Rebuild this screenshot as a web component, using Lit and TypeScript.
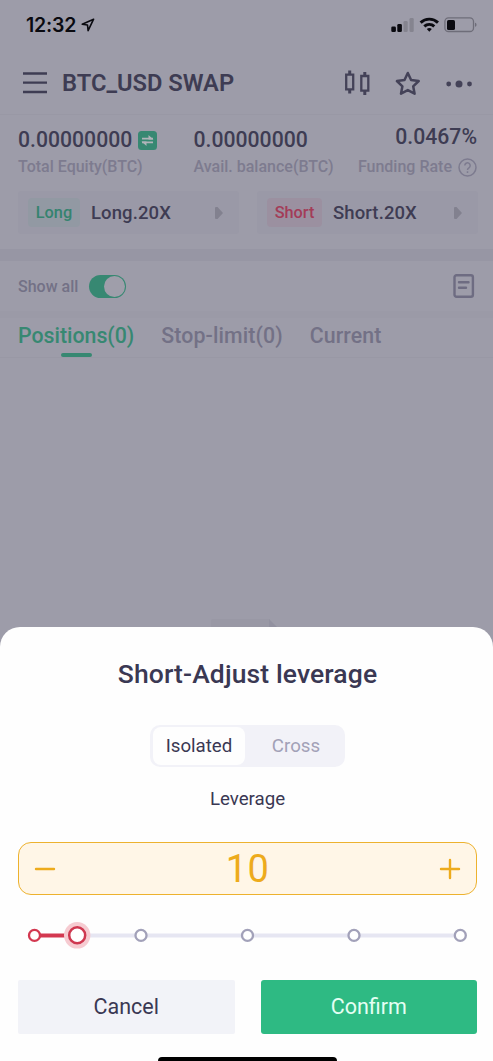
import { LitElement, html, css, svg } from "lit";
import { customElement, property, state } from "lit/decorators.js";

@customElement("status-bar")
class StatusBar extends LitElement {
  static styles = css`
    :host { display: flex; align-items: center; height: 50px; padding: 0 16px 0 26px; color: #0a0a10; }
    .time { font: 600 19.500px/24px Inter, sans-serif; letter-spacing: -0.2px; }
    .loc { margin-left: 5px; }
    .right { margin-left: auto; }
    svg { display: block; }
  `;
  render() {
    return html`
      <span class="time">12:32</span>
      <svg class="loc" width="14" height="14" viewBox="0 0 14 14" fill="none" stroke="currentColor" stroke-width="1.6" stroke-linejoin="round"><path d="M12.600 1.200 1.200 6.200l5.300.8.600 5.600z"/></svg>
      <svg class="right" width="86" height="18" viewBox="391 16 86 18">
        <rect x="391.300" y="26.500" width="4.600" height="5.500" rx="1.300" fill="currentColor"/>
        <rect x="397.300" y="24" width="4.600" height="8" rx="1.300" fill="currentColor"/>
        <rect x="403.500" y="21" width="4.200" height="11" rx="1.300" fill="#85848f"/>
        <rect x="409.500" y="18" width="4.200" height="14" rx="1.300" fill="#85848f"/>
        <g fill="none" stroke="currentColor" stroke-width="2.900"><path d="M420.600 22.600a12.600 12.600 0 0 1 17.400 0M424.300 26.400a7.200 7.200 0 0 1 10 0"/></g>
        <path d="M426.800 29a4 4 0 0 1 5 0l-2.500 2.800z" fill="currentColor"/>
        <rect x="444.900" y="17.900" width="28.600" height="13.600" rx="3.600" fill="none" stroke="#6e6d79" stroke-width="1.300"/>
        <rect x="447" y="20" width="8" height="10" rx="1.600" fill="currentColor"/>
        <path d="M475 22.800c2 .6 2 3.400 0 4z" fill="#6e6d79"/>
      </svg>`;
  }
}

@customElement("side-card")
class SideCard extends LitElement {
  @property() side = "Long";
  static styles = css`
    :host { display: flex; align-items: center; box-sizing: border-box; height: 43px; padding: 0 16px 0 10px; background: #9a99a7; border-radius: 3px; }
    .tag { width: 52px; height: 29px; border-radius: 4px; text-align: center; font: 500 16.300px/29px Roboto, sans-serif; }
    .Long { background: #9299a3; color: #35836f; }
    .Short { background: #9b90a0; width: 55px; color: #a33c58; }
    .name { margin-left: 11px; font: 500 18.500px/24px Roboto, sans-serif; color: #3e3c53; letter-spacing: 0.1px; }
    svg { margin-left: auto; display: block; }
  `;
  render() {
    return html`
      <span class="tag ${this.side}">${this.side}</span>
      <span class="name">${this.side}.20X</span>
      <svg width="8" height="12" viewBox="0 0 8 12"><path d="M0 1q0-1 1-1h1.500L8 6l-5.500 6H1q-1 0-1-1z" fill="#82818f"/></svg>`;
  }
}

@customElement("leverage-slider")
class LeverageSlider extends LitElement {
  static styles = css`:host, svg { display: block; }`;
  render() {
    return html`<svg width="459" height="30" viewBox="18 920 459 30" fill="#fff">
      <path d="M77 935.500H460" stroke="#e6e6f2" stroke-width="4"/>
      <path d="M34.500 935.500H77" stroke="#d33850" stroke-width="4"/>
      ${[141, 247.5, 354, 460.3].map(x => svg`<circle cx=${x} cy="935.400" r="5.500" stroke="#a2a1b9" stroke-width="2.300"/>`)}
      <circle cx="34.500" cy="935.400" r="5.500" stroke="#d33850" stroke-width="2.300"/>
      <circle cx="77.200" cy="935.300" r="13.200" fill="#f6cbd1"/>
      <circle cx="77.200" cy="935.300" r="8" stroke="#cf3850" stroke-width="2.500"/>
    </svg>`;
  }
}

@customElement("leverage-sheet")
class LeverageSheet extends LitElement {
  @state() leverage = 10;
  static styles = css`
    :host { display: flex; flex-direction: column; align-items: center; box-sizing: border-box; height: 434px; padding: 0 16px 0 18px; background: #fefefe; border-radius: 20px 20px 0 0; overflow: hidden; font-family: Roboto, sans-serif; color: #3a3853; }
    .title { margin-top: 31px; font-size: 26.500px; line-height: 32px; font-weight: 500; letter-spacing: 0.120px; }
    .seg { display: flex; box-sizing: border-box; width: 195px; height: 42px; margin-top: 35px; padding: 2px 3px; border-radius: 10px; background: #f2f2f8; font-size: 18.700px; line-height: 39px; text-align: center; }
    .seg span { flex: 1; padding-left: 5px; color: #a2a1b7; }
    .seg .on { flex: 0 0 92px; padding: 0; background: #fefefe; border-radius: 8px; color: #3a3853; }
    .label { margin-top: 20px; font-size: 18.700px; line-height: 25px; }
    .stepper { display: flex; align-items: center; justify-content: space-between; align-self: stretch; box-sizing: border-box; height: 53px; margin: 30px 0 1px; padding: 0 15px; border: 1.500px solid #edb22e; border-radius: 13px; background: #fff6e7; color: #edab1c; font-size: 38px; line-height: 50px; letter-spacing: 0.300px; }
    .stepper svg { margin-top: 1px; }
    .slider { margin-top: 24px; align-self: stretch; }
    .actions { display: flex; gap: 26px; align-self: stretch; margin-top: 30px; }
    .btn { flex: 1; height: 54px; border-radius: 2px; background: #f2f3f8; text-align: center; font-size: 21.500px; line-height: 54px; }
    .go { border-radius: 3px; background: #2eba83; color: #e4fff3; }
    .home { width: 179px; height: 8px; margin-top: 23px; border-radius: 4px; background: #000; flex: none; }
    .stepper, .actions, .slider { flex: none; }
  `;
  render() {
    const icon = (d: string) => html`<svg width="22" height="22" viewBox="0 0 22 22" stroke="currentColor" stroke-width="2.400" stroke-linecap="round"><path d=${d}/></svg>`;
    return html`
      <div class="title">Short-Adjust leverage</div>
      <div class="seg"><span class="on">Isolated</span><span>Cross</span></div>
      <div class="label">Leverage</div>
      <div class="stepper">${icon("M2 11h18")}<span>${this.leverage}</span>${icon("M2 11h18M11 2v18")}</div>
      <leverage-slider class="slider"></leverage-slider>
      <div class="actions"><div class="btn">Cancel</div><div class="btn go">Confirm</div></div>
      <div class="home"></div>`;
  }
}

@customElement("app-root")
class AppRoot extends LitElement {
  static styles = css`
    :host { display: flex; flex-direction: column; width: 493px; height: 1061px; overflow: hidden; background: #9d9ca9; font-family: Roboto, sans-serif; color: #3e3c53; }
    svg { display: block; flex: none; }
    .head { display: flex; align-items: center; height: 65px; padding: 1px 18px 0 23px; box-sizing: border-box; border-bottom: 1px solid #9998a5; }
    .head h1 { margin: 0 0 0 15px; font-size: 23.700px; line-height: 28px; font-weight: 600; }
    .tools { margin-left: auto; }
    .stats { display: flex; height: 76px; padding: 11px 16px 0 18px; box-sizing: border-box; white-space: nowrap; }
    .stat { flex: 0 0 175.500px; }
    .stat.last { flex: 1; min-width: 0; display: flex; flex-direction: column; align-items: flex-end; }
    .val { display: flex; align-items: center; gap: 6px; font-size: 21.200px; line-height: 28px; font-weight: 500; }
    .last .val { margin-top: -3px; margin-bottom: 3px; }
    .cap { display: flex; align-items: center; gap: 6px; font-size: 16px; line-height: 26px; font-weight: 500; color: #7d7b8f; }
    .stat:nth-child(2) { flex-basis: 139px; }
    .cards { display: flex; gap: 18px; height: 58px; padding: 0 15px 0 18px; }
    .cards > * { flex: 1; }
    .band { height: 12px; background: #9796a4; }
    .show { display: flex; align-items: center; height: 50px; padding: 0 18px; font-size: 16px; font-weight: 500; color: #737186; }
    .switch { width: 35px; height: 21px; margin-left: 11px; padding: 1px; display: flex; justify-content: flex-end; border-radius: 12px; background: #378872; }
    .knob { width: 21px; height: 21px; border-radius: 50%; background: #9f9eaa; }
    .doc { margin-left: auto; }
    .rule { height: 7px; background: #9b9aa7; }
    .tabs { display: flex; gap: 27px; height: 40px; box-sizing: border-box; padding: 5px 18px 0; border-bottom: 1px solid #9998a5; font-size: 21.300px; line-height: 26px; font-weight: 500; color: #737186; }
    .tabs span + span { letter-spacing: 0.120px; }
    .on { display: flex; flex-direction: column; align-items: center; color: #378872; }
    .on::after { content: ""; width: 31px; height: 4px; margin-top: 4px; border-radius: 2px; background: #378872; }
    .empty { flex: 1; display: flex; align-items: flex-end; justify-content: center; padding-right: 5px; }
  `;
  render() {
    return html`
      <status-bar></status-bar>
      <div class="head">
        <svg width="24" height="22" viewBox="0 0 24 22" stroke="#3e3c53" stroke-width="2.300"><path d="M0 1.500h24M0 10.700h24M0 20h24"/></svg>
        <h1>BTC_USD SWAP</h1>
        <svg class="tools" width="132" height="28" viewBox="343 69 132 28" fill="none" stroke="#444258" stroke-width="2.300">
          <path d="M346.200 74.700h7v14.600h-7zM361.300 76h7v14.600h-7z"/>
          <path d="M349.700 70.500v4M349.700 89.500v4M364.800 72v4M364.800 91v4" stroke-width="3"/>
          <path d="m407.800 73 3.300 7 7.600 1-5.500 5.300 1.400 7.400-6.800-3.600-6.800 3.600 1.400-7.400-5.500-5.300 7.600-1z" stroke-linejoin="round" stroke-width="2.500"/>
          <g fill="#444258" stroke="none"><circle cx="448.700" cy="84" r="2.400"/><circle cx="459" cy="84" r="3.500"/><circle cx="469.500" cy="84" r="2.400"/></g>
        </svg>
      </div>
      <div class="stats">
        <div class="stat">
          <div class="val">0.00000000
            <svg width="19" height="19" viewBox="0 0 19 19"><rect width="19" height="19" rx="3.500" fill="#378872"/><path d="M4 7.600h11M4 11.400h11" stroke="#b0b3b9" stroke-width="1.900"/><path d="M10.500 4v4.500h5zM8.500 15v-4.500h-5z" fill="#b0b3b9"/></svg>
          </div>
          <div class="cap">Total Equity(BTC)</div>
        </div>
        <div class="stat"><div class="val">0.00000000</div><div class="cap">Avail. balance(BTC)</div></div>
        <div class="stat last">
          <div class="val">0.0467%</div>
          <div class="cap">Funding Rate
            <svg width="19" height="19" viewBox="0 0 19 19" fill="none" stroke="#7d7b8f" stroke-width="1.500"><circle cx="9.500" cy="9.500" r="8.500"/><path d="M6.800 7.600a2.700 2.700 0 1 1 4.200 2.200c-1 .7-1.500 1-1.500 2.200M9.500 13.300v1.600"/></svg>
          </div>
        </div>
      </div>
      <div class="cards"><side-card side="Long"></side-card><side-card side="Short"></side-card></div>
      <div class="band"></div>
      <div class="show">Show all<span class="switch"><span class="knob"></span></span>
        <svg class="doc" width="22" height="24" viewBox="0 0 22 24" fill="none" stroke="#6e6c82" stroke-width="2.400" stroke-linecap="round"><rect x="1.500" y="1.300" width="18.400" height="21.400" rx="2"/><path d="M6 8.200h9.500M6 13.800h7"/></svg>
      </div>
      <div class="rule"></div>
      <div class="tabs"><span class="on">Positions(0)</span><span>Stop-limit(0)</span><span>Current</span></div>
      <div class="empty"><svg width="66" height="8" viewBox="0 0 66 8"><path d="M0 2q0-2 2-2h57v8H0z" fill="#9998a5"/><path d="M58 0l8 8h-8z" fill="#9291a0"/></svg></div>
      <leverage-sheet></leverage-sheet>`;
  }
}
